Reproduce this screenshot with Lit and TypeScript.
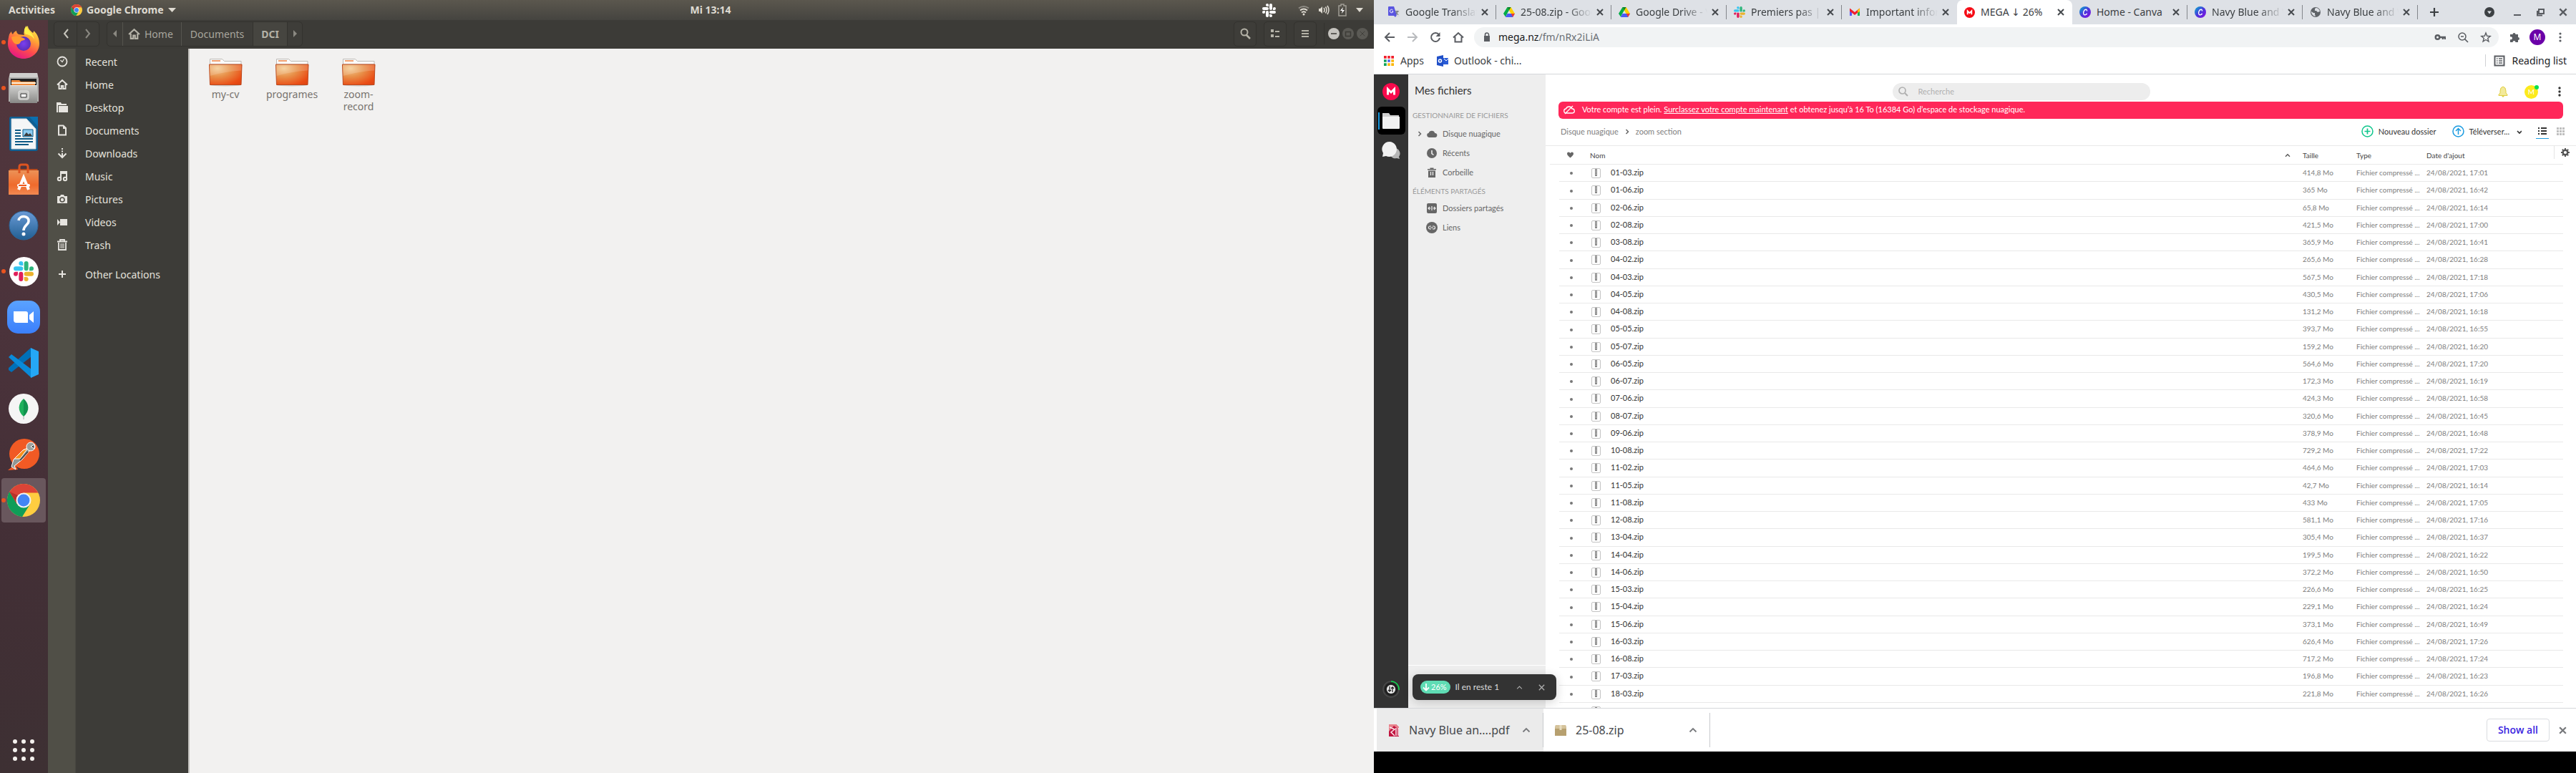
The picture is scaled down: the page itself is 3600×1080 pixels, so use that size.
import { LitElement, html, css, svg, nothing, type TemplateResult } from "lit";
import { customElement } from "lit/decorators.js";

const icon = (w: number, h: number, box: string, body: unknown) =>
  html`<svg width=${w} height=${h} viewBox=${box} fill="none" aria-hidden="true">${body}</svg>`;

const reset = css`
  * { box-sizing: border-box; }
  svg { display: block; flex: none; }
  button { font: inherit; color: inherit; background: none; border: 0; padding: 0; margin: 0; display: flex; align-items: center; justify-content: center; cursor: pointer; }
  a { color: inherit; text-decoration: none; }
  ul { list-style: none; margin: 0; padding: 0; }
`;

/* ---------- shared glyphs ---------- */

const chromeLogo = (s: number) => icon(s, s, "0 0 48 48", svg`
  <circle cx="24" cy="24" r="24" fill="#ffcd40"/>
  <path d="M14.500 29.500 3.400 11.600A24 24 0 0 0 22 47.900L33.500 29.500Z" fill="#0f9d58"/>
  <path d="M24 13H45.300A24 24 0 0 0 3.400 11.600L14.500 29.500Z" fill="#db4437"/>
  <path d="M14.500 29.500 3.400 11.600l12 5z" fill="#b8322a"/>
  <circle cx="24" cy="24" r="11" fill="#f1f1f1"/><circle cx="24" cy="24" r="8.800" fill="#4285f4"/>`);

const slackMark = (s: number, c: string[]) => icon(s, s, "0 0 122 122", svg`
  <path fill=${c[0]} d="M26 77a13 13 0 1 1-13-13h13zM32 77a13 13 0 1 1 26 0v32a13 13 0 1 1-26 0z"/>
  <path fill=${c[1]} d="M45 26a13 13 0 1 1 13-13v13zM45 32a13 13 0 1 1 0 26H13a13 13 0 1 1 0-26z"/>
  <path fill=${c[2]} d="M96 45a13 13 0 1 1 13 13H96zM90 45a13 13 0 1 1-26 0V13a13 13 0 1 1 26 0z"/>
  <path fill=${c[3]} d="M77 96a13 13 0 1 1-13 13V96zM77 90a13 13 0 1 1 0-26h32a13 13 0 1 1 0 26z"/>`);
const slackColors = ["#e01e5a", "#36c5f0", "#2eb67d", "#ecb22e"];

const cross = (s: number, c = "#45494d", w = 2) =>
  icon(s, s, "0 0 12 12", svg`<path d="M2 2 10 10M10 2 2 10" stroke=${c} stroke-width=${w}/>`);

const chevronUp = (s: number, c: string, w = 2) =>
  icon(s, s, "0 0 12 12", svg`<path d="M1.500 8.500 6 4 10.500 8.500" stroke=${c} stroke-width=${w}/>`);

const homeGlyph = (s: number, c: string) => icon(s, s, "0 0 16 16", svg`
  <path d="M1 8.500 8 2l7 6.500M3.500 7.500V14H6.800V10h2.400v4h3.300V7.500" stroke=${c} stroke-width="2"/>`);

/* ---------- launcher icons ---------- */

const firefox = icon(46, 46, "0 0 46 46", svg`
  <defs>
    <linearGradient id="ff" x1=".8" y1="0" x2=".3" y2="1"><stop offset="0" stop-color="#fff44f"/><stop offset=".35" stop-color="#ffa436"/><stop offset=".65" stop-color="#ff4f4b"/><stop offset="1" stop-color="#e31587"/></linearGradient>
    <radialGradient id="fg"><stop offset="0" stop-color="#7a3ff0"/><stop offset="1" stop-color="#5b2fb8"/></radialGradient>
  </defs>
  <path d="M3 12c1-2 2-3 3-4 0 2 1 3 2 4 1-3 3-4 5-5 0 2 1 4 3 5l8 1c-2-4 1-9 5-13 0 5 4 7 7 10 1-1 1-2 1-3 6 5 8 12 8 18 0 12-10 21-22 21S1 37 1 25c0-5 1-9 2-13z" fill="url(#ff)"/>
  <path d="M27 0c0 6 9 9 11 19-3-5-8-7-12-7-3-3-3-8 1-12z" fill="#fff04a"/>
  <circle cx="23" cy="25" r="10" fill="url(#fg)"/>
  <path d="M6 16c4-2 9-2 13 0 3 1 5 1 6 3-1 2-5 1-6 3s-1 3-4 4c-5 0-8-4-9-10z" fill="#ff9a30"/>`);

const filesApp = icon(44, 46, "0 0 44 46", svg`
  <defs><linearGradient id="cab" x2="0" y2="1"><stop stop-color="#d2d2d0"/><stop offset="1" stop-color="#888886"/></linearGradient></defs>
  <path d="M3 2h38l2 8v32H1V10z" fill="#aeaeac"/><path d="M3 2h38l1 6H2z" fill="#cfcfcd"/>
  <path d="M4 10h36v10H4z" fill="#222"/><path d="M5 12h11l2 2h20v5H5z" fill="#f08a3c"/><path d="M5 15h34v2H5z" fill="#fff1dc"/>
  <path d="M3 19h38v25H3z" fill="url(#cab)"/><path d="M3 19h38v1H3z" fill="#e4e4e2"/>
  <rect x="15" y="27" width="14" height="12" rx="2" fill="#c9c9c7" stroke="#e6e6e4"/><path d="M18 31h8v5h-8z" fill="#f5f5f5" stroke="#333"/>`);

const writerApp = icon(42, 48, "0 0 42 48", svg`
  <path d="M3 0h38v45q0 3-3 3H4q-3 0-3-3V3q0-3 2-3z" fill="#0f5f93"/>
  <path d="M29 0h12v14z" fill="#0b6fb0"/><path d="M4 3h21l13 14v28H4z" fill="#f4f6f7" stroke="#c9d3d9"/>
  <path d="M9 19h8M9 23h8M9 27h8M9 31h25M9 35h25M9 39h19" stroke="#0d5a86" stroke-width="2"/>
  <path d="M20 18h14v10H20z" fill="#8ccbf0" stroke="#0d5a86"/><path d="M21 27l4-5 3 3 2-2 3 4z" fill="#3b3b3b"/>`);

const softwareApp = icon(44, 46, "0 0 44 46", svg`
  <defs><linearGradient id="bag" x2="0" y2="1"><stop stop-color="#ec9257"/><stop offset=".6" stop-color="#ef6a2c"/><stop offset="1" stop-color="#f28a52"/></linearGradient></defs>
  <path d="M2 8h40l-2 4H4z" fill="#b94a1c"/><path d="M16 14V5q0-3 3-3h6q3 0 3 3v9" stroke="#dd5420" stroke-width="3"/>
  <path d="M1 10h42v34H1z" fill="url(#bag)"/><path d="M16 14V8M28 14V8" stroke="#dd5420" stroke-width="3"/>
  <path d="M15 37 22 20l7 17" stroke="#fff" stroke-width="4"/><rect x="13" y="29" width="18" height="4" rx="2" fill="#fff"/><path d="M15 31h11" stroke="#ef5a1c" stroke-width="2"/>`);

const helpApp = icon(42, 42, "0 0 42 42", svg`
  <defs><linearGradient id="hp" x2="0" y2="1"><stop stop-color="#6a9ad6"/><stop offset="1" stop-color="#215f92"/></linearGradient></defs>
  <circle cx="21" cy="21" r="20" fill="url(#hp)" stroke="#2c6598"/>
  <path d="M14 14c1-8 15-7 14 1 0 5-7 6-7 13" stroke="#fff" stroke-width="3.500"/><circle cx="21" cy="33" r="2.500" fill="#fff"/>`);

const zoomApp = icon(46, 46, "0 0 46 46", svg`
  <defs><linearGradient id="zm" x2="0" y2="1"><stop stop-color="#5aa2ff"/><stop offset="1" stop-color="#3b7ffb"/></linearGradient></defs>
  <rect width="46" height="46" rx="15" fill="url(#zm)"/><path d="M9 15h17q3 0 3 3v13H13q-4 0-4-4zM31 20l6-5v16l-6-5z" fill="#fff"/>`);

const codeApp = icon(44, 44, "0 0 44 44", svg`
  <path d="M32 1 1 29v3l4 3 28-22z" fill="#0070b8"/><path d="M1 14l4-4 28 21v12z" fill="#0a8ad8"/><path d="M32 1l11 5v32l-11 5z" fill="#25a7f5"/>`);

const mongoApp = icon(44, 44, "0 0 44 44", svg`
  <circle cx="22" cy="22" r="21" fill="#f5f5f5"/><path d="M22 8c8 7 9 17 0 25z" fill="#12924f"/><path d="M22 8c-8 7-9 17 0 25z" fill="#1eb05c"/><path d="M22 33v4" stroke="#aaa"/>`);

const postmanApp = icon(46, 46, "0 0 46 46", svg`
  <circle cx="24" cy="22" r="21" fill="#f15a24"/><path d="M1 45l10-8 4 7z" fill="#f15a24"/>
  <path d="M9 30 22 17l9-4 1 4L21 30 10 39l2 5-6-4z" fill="#8f9693" stroke="#fff"/>
  <path d="M10 29l12-12 7-3L18 29z" fill="#f7921e" stroke="#fff"/><path d="M18 31l11-12" stroke="#4d4f4e" stroke-width="2"/>
  <circle cx="33" cy="12" r="6" fill="#9aa19e" stroke="#fff"/><path d="M33 12l5-3v6z" fill="#444" stroke="#fff"/>`);

const slackApp = html`<span class="disc">${slackMark(28, slackColors)}</span>`;

const launcher: { name: string; glyph: TemplateResult; running?: boolean; active?: boolean }[] = [
  { name: "Firefox", glyph: firefox, running: true },
  { name: "Files", glyph: filesApp, running: true },
  { name: "LibreOffice Writer", glyph: writerApp },
  { name: "Ubuntu Software", glyph: softwareApp },
  { name: "Help", glyph: helpApp },
  { name: "Slack", glyph: slackApp, running: true },
  { name: "Zoom", glyph: zoomApp },
  { name: "Visual Studio Code", glyph: codeApp },
  { name: "MongoDB Compass", glyph: mongoApp },
  { name: "Postman", glyph: postmanApp },
  { name: "Google Chrome", glyph: chromeLogo(46), running: true, active: true },
];

/* ---------- top bar ---------- */

@customElement("top-bar")
class TopBar extends LitElement {
  static styles = [reset, css`
    :host { display: grid; grid-template-columns: 14fr auto 13fr; align-items: center; height: 28px; padding: 0 14px 0 12px; background: linear-gradient(#5b574e, #454440); color: #dfdbd2; font: bold 14px/28px "Noto Sans", sans-serif; }
    .start, .end { display: flex; align-items: center; }
    .start { gap: 22px; }
    .app { gap: 6px; }
    .end { justify-content: flex-end; }
    .tray { gap: 12px; margin-left: 31px; }
  `];
  render() {
    const white = ["#fff", "#fff", "#fff", "#fff"];
    return html`
      <div class="start">
        <button>Activities</button>
        <button class="app">${chromeLogo(16)}<span>Google Chrome</span>${icon(12, 8, "0 0 12 8", svg`<path d="M0 1h11L5.500 7z" fill="#dfdbd2"/>`)}</button>
      </div>
      <time>Mi 13:14</time>
      <div class="end">
        <button aria-label="Slack">${slackMark(19, white)}</button>
        <button class="tray" aria-label="System menu">
          ${icon(16, 16, "0 0 16 16", svg`<path d="M1 5.500q7-5 14 0" stroke="#8e8b84" stroke-width="2"/><path d="M3 8.500q5-4 10 0M5 11.500q3-2.500 6 0" stroke="#dfdbd2" stroke-width="2"/><circle cx="8" cy="14" r="1.500" fill="#dfdbd2"/>`)}
          ${icon(16, 16, "0 0 16 16", svg`<path d="M1 6h2l3-3v10l-3-3H1z" fill="#dfdbd2"/><path d="M8 5q2 3 0 6M10.500 3.500q3 4.500 0 9M13 2q4 6 0 12" stroke="#dfdbd2" stroke-width="1.500"/>`)}
          ${icon(12, 18, "0 0 12 18", svg`<path d="M4 1h4v2h3v14H1V3h3z" stroke="#a09d95" stroke-width="1.500"/><path d="M7 5 3 10h3l-1 4 4-5H6z" fill="#fff"/>`)}
          ${icon(12, 8, "0 0 12 8", svg`<path d="M1 1h10L6 7z" fill="#dfdbd2"/>`)}
        </button>
      </div>`;
  }
}

/* ---------- launcher ---------- */

@customElement("app-launcher")
class AppLauncher extends LitElement {
  static styles = [reset, css`
    :host { display: flex; flex-direction: column; width: 67px; background: linear-gradient(#53373d, #4b333b 40%, #432f36 70%, #3d3033); }
    .slot { height: 64px; width: 66px; padding: 0 2px; position: relative; }
    .tile { width: 62px; height: 62px; border-radius: 4px; }
    .active { background: #69575d; }
    .dot { position: absolute; left: 2px; top: 28px; width: 6px; height: 6px; border-radius: 50%; background: #e95420; }
    .disc { display: flex; align-items: center; justify-content: center; width: 41px; height: 41px; border-radius: 50%; background: #fff; }
    .apps { margin-top: auto; height: 64px; width: 66px; }
  `];
  render() {
    const dots = [4, 16, 28];
    return html`
      ${launcher.map(a => html`
        <div class="slot">
          <button class="tile ${a.active ? "active" : ""}" aria-label=${a.name}>${a.glyph}</button>
          ${a.running ? html`<span class="dot"></span>` : nothing}
        </div>`)}
      <button class="apps" aria-label="Show applications">
        ${icon(32, 32, "0 0 32 32", dots.map(y => dots.map(x => svg`<circle cx=${x} cy=${y} r="3" fill="#f4f1ee"/>`)))}
      </button>`;
  }
}

/* ---------- file manager ---------- */

const g = "#e6e4df";
const places: [string, TemplateResult][] = [
  ["Recent", icon(16, 16, "0 0 16 16", svg`<circle cx="8" cy="8" r="6.500" stroke=${g} stroke-width="1.800"/><path d="M5.500 6 8 8.500 10.500 4.500" stroke=${g} stroke-width="1.300"/>`)],
  ["Home", homeGlyph(16, g)],
  ["Desktop", icon(16, 16, "0 0 16 16", svg`<path d="M0 1h6l1 2h7v2H2v10H0z" fill=${g}/><path d="M3 6h13v9H3z" fill=${g}/>`)],
  ["Documents", icon(16, 16, "0 0 16 16", svg`<path d="M3 1.500h6.500L13 5v9.500H3z" stroke=${g} stroke-width="2"/><path d="M9 1l4 5H9z" fill=${g}/>`)],
  ["Downloads", icon(16, 16, "0 0 16 16", svg`<path d="M8 1v2M8 4.500v2M8 8v5" stroke=${g} stroke-width="2"/><path d="M2.500 8.500 8 14l5.500-5.500" stroke=${g} stroke-width="2"/>`)],
  ["Music", icon(16, 16, "0 0 16 16", svg`<path d="M6 12V2h8v10" stroke=${g} stroke-width="2"/><path d="M6 4h8" stroke=${g} stroke-width="2"/><circle cx="4" cy="12" r="2.200" stroke=${g} stroke-width="2"/><circle cx="12" cy="12" r="2.200" stroke=${g} stroke-width="2"/>`)],
  ["Pictures", icon(16, 16, "0 0 16 16", svg`<path d="M1 4h4l1-2h4l1 2h4v10H1z" fill=${g}/><circle cx="8" cy="9" r="3" stroke="#504f47" stroke-width="1.600"/>`)],
  ["Videos", icon(16, 16, "0 0 16 16", svg`<path d="M5 4h10v9H5z" fill=${g}/><path d="M1 4l4 4.500L1 13z" fill=${g}/>`)],
  ["Trash", icon(16, 16, "0 0 16 16", svg`<path d="M1 3.500h14M5 3V1h6v2M3 5v10h10V5" stroke=${g} stroke-width="1.800"/><path d="M6 6v7M8 6v7M10 6v7" stroke=${g}/>`)],
];

const folder = icon(48, 40, "0 0 48 40", svg`
  <defs>
    <radialGradient id="fo" cx=".25" cy=".2" r="1"><stop stop-color="#f4cb92"/><stop offset=".4" stop-color="#e8914a"/><stop offset=".85" stop-color="#ea4d15"/><stop offset="1" stop-color="#e04512"/></radialGradient>
  </defs>
  <ellipse cx="24" cy="38" rx="21" ry="1.500" fill="#ccc8c4"/>
  <path d="M2.500 9V1.500h17l3 3H46V9z" fill="#fbfbfb" stroke="#bdbab6"/><path d="M5 3h12v2H5z" fill="#f0a070"/>
  <path d="M1.500 9h45.500l-1 28.500h-43.500z" fill="url(#fo)" stroke="#bb4a20"/>
  <path d="M2 9.500h44v8Q22 19 2.500 25z" fill="#fff" opacity=".16"/>`);

@customElement("file-manager")
class FileManager extends LitElement {
  static styles = [reset, css`
    :host { display: flex; flex-direction: column; flex: 1; min-width: 0; font: 14px/17px "Noto Sans", sans-serif; background: #f2f1f0; }
    .bar { display: flex; align-items: center; gap: 10px; height: 40px; padding: 2px 8px 4px; background: #3c3b37; color: #a8a69d; }
    .group, .tool { display: flex; height: 35px; border: 1px solid #33322e; border-radius: 5px; background: #3e3d39; }
    .group button { border-left: 1px solid #33322e; padding: 0 12px; gap: 6px; }
    .group button:first-child { border-left: 0; }
    .nav button { width: 31px; padding: 0; }
    .path button { border-color: #55544e; }
    .path .end { width: 21px; padding: 0; }
    .path .up { padding: 0 11px 0 7px; }
    .path .here { background: #464540; font-weight: bold; color: #b5b3a8; padding: 0 11px; }
    .path .dim { border-color: #33322e; }
    .space { flex: 1; }
    .tool { width: 32px; }
    .win { display: flex; gap: 4px; padding-left: 5px; border-left: 1px solid #33322e; height: 30px; align-items: center; }
    .win button { width: 16px; height: 16px; border-radius: 50%; background: #5b5a55; }
    .win .min { background: #c6c4bf; }
    .body { display: flex; flex: 1; min-height: 0; }
    .places { width: 198px; padding-top: 2px; color: #e4e2dc; background: linear-gradient(90deg, #504f47 38px, #484740 38px, #484740 39px, #3d3c38 39px); border-right: 2px solid #c6c3bf; }
    .place { display: flex; align-items: center; height: 32px; padding-left: 12px; gap: 24px; }
    .other { margin-top: 9px; }
    .grid { display: flex; gap: 1px; padding: 13px 4px; align-items: flex-start; color: #77736e; }
    .item { width: 92px; display: flex; flex-direction: column; align-items: center; gap: 2px; text-align: center; }
    .label { width: 60px; display: flex; justify-content: center; }
  `];
  render() {
    const c = "#b5b3a8";
    return html`
      <header class="bar">
        <div class="group nav">
          <button aria-label="Back">${icon(10, 14, "0 0 10 14", svg`<path d="M8 1 3 7l5 6" stroke="#c8c6bd" stroke-width="2"/>`)}</button>
          <button aria-label="Forward">${icon(10, 14, "0 0 10 14", svg`<path d="M2 1l5 6-5 6" stroke="#8b8982" stroke-width="2"/>`)}</button>
        </div>
        <nav class="group path" aria-label="Location">
          <button class="end" aria-label="Scroll left">${icon(6, 10, "0 0 6 10", svg`<path d="M5 0v10L0 5z" fill="#8b8982"/>`)}</button>
          <button class="up">${homeGlyph(17, c)}<span>Home</span></button>
          <button>Documents</button>
          <button class="here dim">DCI</button>
          <button class="end dim" aria-label="Scroll right">${icon(6, 10, "0 0 6 10", svg`<path d="M1 0v10l5-5z" fill="#8b8982"/>`)}</button>
        </nav>
        <span class="space"></span>
        <button class="tool" aria-label="Search">${icon(16, 16, "0 0 16 16", svg`<circle cx="7" cy="6" r="4.500" stroke=${c} stroke-width="2"/><path d="M10 10l5 5" stroke=${c} stroke-width="2.500"/>`)}</button>
        <button class="tool" aria-label="View as list">${icon(14, 12, "0 0 14 12", svg`<path d="M1 0h4v4H1zM1 7h4v4H1z" fill=${c}/><path d="M7 3h6M7 10h6" stroke=${c} stroke-width="2"/>`)}</button>
        <button class="tool" aria-label="Menu">${icon(12, 12, "0 0 12 12", svg`<path d="M1 2h10M1 6h10M1 10h10" stroke=${c} stroke-width="2"/>`)}</button>
        <div class="win">
          <button class="min" aria-label="Minimize">${icon(10, 10, "0 0 10 10", svg`<path d="M1 5h8" stroke="#3c3b37" stroke-width="1.500"/>`)}</button>
          <button aria-label="Maximize">${icon(10, 10, "0 0 10 10", svg`<path d="M1.500 2.500h7v6h-7z" stroke="#3c3b37" stroke-width="1.500"/>`)}</button>
          <button aria-label="Close">${cross(10, "#3c3b37", 1)}</button>
        </div>
      </header>
      <div class="body">
        <nav class="places" aria-label="Places">
          ${places.map(([name, glyph]) => html`<a class="place" href="#${name}">${glyph}<span>${name}</span></a>`)}
          <a class="place other" href="#other">${icon(16, 16, "0 0 16 16", svg`<path d="M8 3v10M3 8h10" stroke=${g} stroke-width="2"/>`)}<span>Other Locations</span></a>
        </nav>
        <div class="grid">
          ${["my-cv", "programes", "zoom-record"].map(n => html`<a class="item" href="#${n}">${folder}<span class="label">${n}</span></a>`)}
        </div>
      </div>`;
  }
}

/* ---------- browser chrome ---------- */

const drive = icon(16, 16, "0 0 16 16", svg`
  <path d="M5.500 1h5L5.500 9.500 3 14.500 0 10z" fill="#00ac47"/><path d="M5.500 1h5L16 10h-5.500z" fill="#ffcf00"/><path d="M5.500 1h5L8 5.500z" fill="#00832d"/>
  <path d="M5.500 10H16l-3 5H2.800z" fill="#4a5cf5"/><path d="M11 10h5l-3 5z" fill="#f03a2e"/>`);
const canva = html`<svg width="16" height="16" viewBox="0 0 16 16" aria-hidden="true">
  <defs><linearGradient id="cv" x2="1" y2="1"><stop stop-color="#00b8cc"/><stop offset=".5" stop-color="#4b35dc"/><stop offset="1" stop-color="#8a0de0"/></linearGradient></defs>
  <circle cx="8" cy="8" r="8" fill="url(#cv)"/><path d="M10.500 6.500C11 3.500 7.500 3.500 6 7c-1.300 3.500.5 5.500 2.500 4.700 1-.4 1.700-1 2-2" fill="none" stroke="#fff" stroke-width="1.400"/></svg>`;
const megaLogo = (s: number, c: string) => icon(s, s, "0 0 24 24", svg`<circle cx="12" cy="12" r="12" fill=${c}/><path d="M7.500 16.500v-8l4.500 4.500 4.500-4.500v8" stroke="#fff" stroke-width="3"/>`);

const tabs: { title: string; glyph: TemplateResult; active?: boolean }[] = [
  { title: "Google Translate", glyph: icon(16, 16, "0 0 16 16", svg`<path d="M6 4h9q1 0 1 1v10H9z" fill="#dadce0"/><path d="M0 1q0-1 1-1h7l4 12-2 3-2-2H1q-1 0-1-1z" fill="#5a55e0"/><path d="M6.500 5A2.300 2.300 0 1 0 7 7H5" stroke="#fff"/><path d="M10 7h5M12.500 6v1q0 3-2 4M11.500 8.500 14 12" stroke="#5f6368"/>`) },
  { title: "25-08.zip - Google Drive", glyph: drive },
  { title: "Google Drive - Virus", glyph: drive },
  { title: "Premiers pas | Slack", glyph: slackMark(16, slackColors) },
  { title: "Important information", glyph: icon(16, 16, "0 0 16 16", svg`<path d="M1 3v10h3V6z" fill="#5a55f5"/><path d="M15 3v10h-3V6z" fill="#11b354"/><path d="M1 2.500 8 8l7-5.500v4L8 12 1 6.500z" fill="#f01f2e"/><path d="M12 5l3-2.500V7l-3 2z" fill="#fbbc04"/>`) },
  { title: "MEGA ↓ 26%", glyph: megaLogo(15, "#f50a14"), active: true },
  { title: "Home - Canva", glyph: canva },
  { title: "Navy Blue and White", glyph: canva },
  { title: "Navy Blue and White", glyph: icon(16, 16, "0 0 16 16", svg`<circle cx="8" cy="8" r="7" fill="#5f6368"/><path d="M8 2q5 0 6 5l-3 1-2-2-2 0 0-2zM2 7l3 2h2v2l1 3q-5-1-6-6z" fill="#dee1e6"/>`) },
];

@customElement("browser-bars")
class BrowserBars extends LitElement {
  static styles = [reset, css`
    :host { display: block; font: 14px/18px "Noto Sans", "DejaVu Sans", sans-serif; color: #3c4043; background: #fff; border-bottom: 1px solid #d5d7da; }
    .tabs { display: flex; align-items: center; height: 34px; padding-left: 10px; background: #dee1e6; }
    .tab { display: flex; align-items: center; width: 161px; height: 34px; padding: 0 9px 0 10px; position: relative; }
    .tab::after { content: ""; position: absolute; right: 0; top: 7px; height: 20px; width: 1px; background: #83868b; }
    .tab.on { background: #fff; border-radius: 8px 8px 0 0; }
    .tab.on::after, .tab.pre::after { display: none; }
    .pick { flex: 1; min-width: 0; gap: 8px; justify-content: flex-start; }
    .title { flex: 1; overflow: hidden; white-space: nowrap; text-align: left; mask-image: linear-gradient(90deg, #000 65%, transparent); }
    .on .title, .full .title { mask-image: none; }
    .shut { margin-left: 4px; width: 14px; height: 14px; }
    .plus { margin-left: 16px; }
    .win { display: flex; align-items: center; gap: 18px; margin-left: auto; padding-right: 11px; }
    .win .find { margin-right: 7px; }
    .tools { display: flex; align-items: center; height: 36px; padding: 0 14px; }
    .nav { display: flex; gap: 16px; }
    .omni { display: flex; align-items: center; flex: 1; height: 28px; margin: 0 14px; padding: 0 10px; border-radius: 14px; background: #f1f3f4; }
    .url { margin-left: 8px; flex: 1; color: #6b6f74; }
    .host { color: #17181a; }
    .acts { display: flex; gap: 16px; }
    .me { width: 22px; height: 22px; margin: 0 13px; border-radius: 50%; background: #6a00a8; color: #fff; font-size: 12px; }
    .marks { display: flex; align-items: center; height: 33px; padding: 0 13px 4px; }
    .marks a { display: flex; align-items: center; gap: 8px; margin-right: 18px; white-space: nowrap; }
    .marks .list { margin: 0 0 0 auto; padding-left: 11px; border-left: 1px solid #cfd1d4; height: 17px; gap: 9px; color: #202124; }
  `];
  render() {
    const k = "#5a5d62";
    return html`
      <div class="tabs" role="tablist">
        ${tabs.map((t, i) => html`
          <div class="tab ${t.active ? "on" : ""} ${tabs[i + 1]?.active ? "pre" : ""} ${t.title === "Home - Canva" ? "full" : ""}">
            <button class="pick" role="tab" aria-selected=${t.active ? "true" : "false"}>${t.glyph}<span class="title">${t.title}</span></button>
            <button class="shut" aria-label="Close tab">${cross(12)}</button>
          </div>`)}
        <button class="plus" aria-label="New tab">${icon(14, 14, "0 0 14 14", svg`<path d="M7 1v12M1 7h12" stroke="#3c4043" stroke-width="2.200"/>`)}</button>
        <div class="win">
          <button class="find" aria-label="Search tabs">${icon(14, 14, "0 0 14 14", svg`<circle cx="7" cy="7" r="7" fill="#3c4043"/><path d="M4 5.500h6L7 9.500z" fill="#dee1e6"/>`)}</button>
          <button aria-label="Minimize">${icon(14, 14, "0 0 14 14", svg`<path d="M2 11h10" stroke=${k} stroke-width="2"/>`)}</button>
          <button aria-label="Restore">${icon(14, 14, "0 0 14 14", svg`<path d="M5 3h7v6H5zM3 5v6.500h7" stroke=${k} stroke-width="2"/>`)}</button>
          <button aria-label="Close window">${cross(14, k)}</button>
        </div>
      </div>
      <div class="tools">
        <div class="nav">
          <button aria-label="Back">${icon(16, 16, "0 0 16 16", svg`<path d="M15 8H2M8 2 2 8l6 6" stroke=${k} stroke-width="2"/>`)}</button>
          <button aria-label="Forward">${icon(16, 16, "0 0 16 16", svg`<path d="M1 8h13M8 2l6 6-6 6" stroke="#b9bbbe" stroke-width="2"/>`)}</button>
          <button aria-label="Reload">${icon(16, 16, "0 0 16 16", svg`<path d="M13 4.500A6 6 0 1 0 14 9" stroke=${k} stroke-width="2"/><path d="M14.500 1v6H8.500z" fill=${k}/>`)}</button>
          <button aria-label="Home page">${icon(16, 16, "0 0 16 16", svg`<path d="M1 8.500 8 2l7 6.500M3.500 7.500v7h9v-7" stroke=${k} stroke-width="2"/>`)}</button>
        </div>
        <div class="omni">
          ${icon(16, 16, "0 0 16 16", svg`<path d="M4 6h8v8H4z" fill=${k}/><path d="M5.500 7V4.500a2.500 2.500 0 0 1 5 0V7" stroke=${k} stroke-width="1.600"/>`)}
          <span class="url"><span class="host">mega.nz</span>/fm/nRx2iLiA</span>
          <div class="acts">
            <button aria-label="Passwords">${icon(16, 16, "0 0 16 16", svg`<circle cx="4.500" cy="8" r="2.800" stroke=${k} stroke-width="2.400"/><path d="M7 8h8v3M12 8v3" stroke=${k} stroke-width="2.400"/>`)}</button>
            <button aria-label="Zoom out">${icon(16, 16, "0 0 16 16", svg`<circle cx="7" cy="7" r="5" stroke=${k} stroke-width="1.500"/><path d="M5 7h4M10.500 10.500 15 15" stroke=${k} stroke-width="1.700"/>`)}</button>
            <button aria-label="Bookmark">${icon(16, 16, "0 0 16 16", svg`<path d="M8 2l1.700 4.300 4.500.3-3.500 2.900 1.200 4.500L8 11.500 4.100 14l1.200-4.500L1.800 6.600l4.500-.3z" stroke=${k} stroke-width="1.400"/>`)}</button>
          </div>
        </div>
        <button aria-label="Extensions">${icon(16, 16, "0 0 16 16", svg`<path d="M2 4h3.500a2 2 0 1 1 4 0H13v4a2 2 0 1 1 0 4v3H9.500a2 2 0 1 0-4 0H2v-4a2 2 0 1 0 0-3.500z" fill=${k}/>`)}</button>
        <button class="me" aria-label="Profile">M</button>
        <button aria-label="Browser menu">${icon(16, 16, "0 0 16 16", svg`<circle cx="8" cy="3" r="1.600" fill=${k}/><circle cx="8" cy="8" r="1.600" fill=${k}/><circle cx="8" cy="13" r="1.600" fill=${k}/>`)}</button>
      </div>
      <nav class="marks">
        <a href="#apps">${icon(16, 16, "0 0 16 16", svg`
          <path d="M1 1h4v4H1zM6 1h4v4H6zM11 1h4v4h-4z" fill="#f0202c"/><path d="M1 6h4v4H1z" fill="#0fa35a"/><path d="M6 6h4v4H6z" fill="#4a5cf5"/><path d="M11 6h4v4h-4zM6 11h4v4H6zM11 11h4v4h-4z" fill="#fbb604"/><path d="M1 11h4v4H1z" fill="#0fa35a"/>
          <path d="M5.500 0v16M10.500 0v16M0 5.500h16M0 10.500h16" stroke="#fff" stroke-width="1.500"/>`)}<span>Apps</span></a>
        <a href="#outlook">${icon(16, 16, "0 0 16 16", svg`<path d="M0 2l9-2v16l-9-2z" fill="#2050c8"/><path d="M9 4h7v9H9z" fill="#2a5cd6"/><path d="M10 5l3 3 3-3" stroke="#fff"/><circle cx="4.500" cy="8" r="2" stroke="#fff" stroke-width="1.500"/>`)}<span>Outlook - chi...</span></a>
        <button class="list">${icon(16, 16, "0 0 16 16", svg`<path d="M1.500 1.500h13v13h-13z" stroke=${k} stroke-width="2"/><path d="M4 5h1.500M7 5h5M4 8h1.500M7 8h5M4 11h1.500M7 11h5" stroke=${k} stroke-width="1.500"/>`)}<span>Reading list</span></button>
      </nav>`;
  }
}

/* ---------- cloud drive page ---------- */

const files = `01-03|414,8|17:01
01-06|365|16:42
02-06|65,8|16:14
02-08|421,5|17:00
03-08|365,9|16:41
04-02|265,6|16:28
04-03|567,5|17:18
04-05|430,5|17:06
04-08|131,2|16:18
05-05|393,7|16:55
05-07|159,2|16:20
06-05|564,6|17:20
06-07|172,3|16:19
07-06|424,3|16:58
08-07|320,6|16:45
09-06|378,9|16:48
10-08|729,2|17:22
11-02|464,6|17:03
11-05|42,7|16:14
11-08|433|17:05
12-08|581,1|17:16
13-04|305,4|16:37
14-04|199,5|16:22
14-06|372,2|16:50
15-03|226,6|16:25
15-04|229,1|16:24
15-06|373,1|16:49
16-03|626,4|17:26
16-08|717,2|17:24
17-03|196,8|16:23
18-03|221,8|16:26`.split("\n").map(l => l.split("|"));

const d = "#666";
const zipIcon = icon(13, 14, "0 0 13 14", svg`<rect x=".5" y=".5" width="12" height="13" rx="1.500" fill="#fdfdfd" stroke="#c4c4c4"/><path d="M6.500 1v10" stroke="#8a8a8a" stroke-width="3"/><path d="M6.500 2v8" stroke="#e8e8e8" stroke-dasharray="1 1"/>`);

@customElement("cloud-drive")
class CloudDrive extends LitElement {
  static styles = [reset, css`
    :host { display: flex; flex: 1; min-height: 0; overflow: hidden; position: relative; background: #fff; font: 11px/16px Lato, sans-serif; color: #666; }
    .rail { width: 48px; background: #333; display: flex; flex-direction: column; align-items: center; padding: 12px 0 14px; }
    .files { width: 39px; height: 39px; margin: 9px 0; background: #000; border-radius: 6px; position: relative; }
    .files::before { content: ""; position: absolute; left: 1px; top: 8px; width: 2px; height: 24px; background: #1b9be0; }
    .moves { margin-top: auto; }
    .side { width: 192px; background: #eee; display: flex; flex-direction: column; }
    .head { font-size: 15px; line-height: 20px; color: #333; padding: 12px 9px 0; margin: 0; font-weight: normal; }
    .sec { font-size: 10px; line-height: 12px; color: #999; margin: 0; padding: 0 6px; font-weight: normal; }
    .sec.a { margin-top: 19px; }
    .sec.b { margin-top: 7px; }
    .sec + ul { margin-top: 6px; }
    .sec.b + ul { margin-top: 4px; }
    .row { display: flex; align-items: center; height: 27px; }
    .twist { width: 25px; padding-left: 12px; }
    .row a { display: flex; align-items: center; gap: 7px; }
    .quota { margin-top: auto; height: 60px; border-top: 1px solid #fff; padding: 10px; display: flex; gap: 12px; font-size: 10px; line-height: 14px; color: #333; white-space: nowrap; }
    .quota a { color: #00bfa5; }
    .main { flex: 1; min-width: 0; display: flex; flex-direction: column; }
    .top { display: flex; align-items: center; height: 38px; padding-top: 10px; }
    .find { flex: 1; display: flex; justify-content: center; }
    .box { display: flex; align-items: center; gap: 14px; width: 360px; height: 24px; padding: 0 8px; border-radius: 12px; background: #ededed; }
    .box input { flex: 1; border: 0; background: none; outline: 0; font: inherit; padding: 0; }
    .box input::placeholder { color: #b0b0b0; opacity: 1; }
    .user { display: flex; align-items: center; width: 111px; gap: 23px; padding-left: 2px; }
    .face { position: relative; width: 19px; height: 19px; border-radius: 50%; background: #fcea1c; color: #fff; font-size: 10px; }
    .face::after { content: ""; position: absolute; right: -1px; top: 0; width: 6px; height: 6px; border-radius: 50%; background: #0be04e; }
    .alert { display: flex; align-items: center; gap: 10px; height: 24px; margin: 0 18px; padding: 0 7px 2px; border-radius: 6px; background: #ff2759; color: #fff; }
    .alert a { text-decoration: underline; }
    .crumbs { display: flex; align-items: center; height: 38px; padding: 0 16px 2px 21px; border-bottom: 1px solid #e9e9e9; color: #808080; }
    .crumbs nav { display: flex; align-items: center; gap: 8px; flex: 1; }
    .cmd { gap: 7px; margin-right: 22px; color: #333; }
    .cmd.up { margin-right: 20px; }
    .view { width: 18px; height: 21px; border-bottom: 1px solid #1b9be0; }
    .tiles { margin-left: 11px; }
    .scroll { flex: 1; min-height: 0; overflow: hidden; position: relative; padding: 0 18px 0 6px; }
    .gear { position: absolute; right: 0; top: 0; width: 31px; height: 18px; border-left: 1px solid #e4e4e4; }
    table { width: 100%; border-spacing: 0; table-layout: fixed; font-size: 10px; line-height: 14px; }
    th, td { padding: 0 0 0 12px; text-align: left; font-weight: normal; white-space: nowrap; border-bottom: 1px solid #e9e9e9; }
    th { height: 26px; color: #444; }
    td { height: 24px; color: #808080; padding-bottom: 2px; }
    tr:nth-child(4n + 2) td { height: 25px; }
    .c-fav { width: 44px; }
    .c-size { width: 75px; }
    .c-type { width: 98px; }
    .c-date { width: 203px; }
    th.fav { padding-left: 24px; }
    td.fav { padding: 0 0 0 28px; border-bottom: 0; background: linear-gradient(#e9e9e9, #e9e9e9) right bottom / calc(100% - 13px) 1px no-repeat; }
    .pip { display: block; width: 4px; height: 4px; border-radius: 50%; background: #777; }
    .sort { display: flex; align-items: center; justify-content: space-between; padding-right: 5px; }
    .name { display: flex; align-items: center; gap: 14px; padding-left: 2px; font-size: 11px; color: #333; }
    .name svg { margin-top: 2px; }
    .toast { position: absolute; left: 54px; bottom: 11px; width: 201px; height: 36px; display: flex; align-items: center; padding: 0 15px 0 11px; border-radius: 8px; background: #333; color: #ddd; font-size: 12px; box-shadow: 0 3px 14px rgba(0, 0, 0, .18); }
    .pct { display: flex; align-items: center; gap: 2px; height: 18px; padding: 0 5px 0 3px; border-radius: 9px; background: #5fdcb4; color: #fff; margin-right: 7px; font-size: 11px; }
    .toast button { margin-left: 21px; }
    .toast .open { margin-left: auto; }
  `];
  item(label: string, glyph: TemplateResult, twist = false) {
    return html`<li class="row"><span class="twist">${twist ? icon(8, 8, "0 0 8 8", svg`<path d="M2.500 1l3 3-3 3" stroke=${d} stroke-width="1.500"/>`) : nothing}</span><a href="#${label}">${glyph}<span>${label}</span></a></li>`;
  }
  render() {
    return html`
      <nav class="rail" aria-label="MEGA">
        <button aria-label="MEGA">${megaLogo(24, "#f90a4c")}</button>
        <button class="files" aria-label="Mes fichiers">${icon(24, 24, "0 0 24 24", svg`<path d="M0 1h9l2 3h12v4H0z" fill="#cfcfcf"/><path d="M0 6h24v16q0 1-1 1H1q-1 0-1-1z" fill="#f1f1f1"/>`)}</button>
        <button aria-label="Chat">${icon(26, 26, "0 0 26 26", svg`<path d="M18 10a7.500 7.500 0 0 1 6 12l1 3-4-1a7.500 7.500 0 0 1-9-4z" fill="#b5b5b5"/><path d="M11 1a10.500 10.500 0 1 1-5 20l-5 1 1-5A10.500 10.500 0 0 1 11 1z" fill="#f1f1f1"/>`)}</button>
        <button class="moves" aria-label="Transferts">${icon(24, 24, "0 0 24 24", svg`<circle cx="12" cy="12" r="11" stroke="#4a4a4a" stroke-width="1.500"/><circle cx="12" cy="12" r="8" stroke="#1c1c1c" stroke-width="2"/><path d="M12 1a11 11 0 0 1 11 12" stroke="#0be04e" stroke-width="1.500"/><circle cx="12" cy="12" r="6" fill="#eee"/><path d="M10 8v7M8 13l2 2 2-2M14 16V9M12 11l2-2 2 2" stroke="#222" stroke-width="1.300"/>`)}</button>
      </nav>
      <aside class="side">
        <h1 class="head">Mes fichiers</h1>
        <h2 class="sec a">GESTIONNAIRE DE FICHIERS</h2>
        <ul>
          ${this.item("Disque nuagique", icon(16, 16, "0 0 16 16", svg`<path d="M4 13a3.200 3.200 0 0 1-.3-6.300 4.500 4.500 0 0 1 8.500.3A3 3 0 0 1 12.500 13z" fill=${d}/>`), true)}
          ${this.item("Récents", icon(16, 16, "0 0 16 16", svg`<circle cx="8" cy="8" r="7" fill=${d}/><path d="M8 4v4.500l2.500 2" stroke="#eee" stroke-width="1.600"/>`))}
          ${this.item("Corbeille", icon(16, 16, "0 0 16 16", svg`<path d="M2 3h12v1.500H2zM5.500 1.500h5V3h-5zM3 5.500h10V15H3z" fill=${d}/><path d="M6.500 7v5M9.500 7v5" stroke="#eee" stroke-width="1.300"/>`))}
        </ul>
        <h2 class="sec b">ÉLÉMENTS PARTAGÉS</h2>
        <ul>
          ${this.item("Dossiers partagés", icon(16, 16, "0 0 16 16", svg`<rect x="1" y="1" width="14" height="14" rx="2" fill=${d}/><path d="M8 5v6M3 8h3.500M9.500 8H13M5 6 3 8l2 2M11 6l2 2-2 2" stroke="#eee" stroke-width="1.200"/>`))}
          ${this.item("Liens", icon(16, 16, "0 0 16 16", svg`<circle cx="8" cy="8" r="8" fill=${d}/><path d="M7 10H5.500a2 2 0 0 1 0-4H7M9 6h1.500a2 2 0 0 1 0 4H9M6 8h4" stroke="#eee" stroke-width="1.200"/>`))}
        </ul>
        <div class="quota"><span>Quota</span><a href="#pro">SURCLASSER VOTRE COMPTE</a></div>
      </aside>
      <main class="main">
        <div class="top">
          <div class="find"><label class="box">${icon(14, 14, "0 0 14 14", svg`<circle cx="5.500" cy="5.500" r="4.500" stroke="#b0b0b0" stroke-width="1.700"/><path d="M9 9l4 4" stroke="#b0b0b0" stroke-width="2"/>`)}<input type="search" placeholder="Recherche" aria-label="Recherche"></label></div>
          <div class="user">
            <button aria-label="Notifications">${icon(14, 16, "0 0 14 16", svg`<path d="M7 1q4 1 4 6v3l2 2v1.500H1V12l2-2V7q0-5 4-6z" fill="#f3ea9a" stroke="#e0cf45"/><path d="M5 14h4l-2 2z" fill="#e0cf45"/>`)}</button>
            <button class="face" aria-label="Compte">M</button>
            <button aria-label="Menu">${icon(14, 14, "0 0 14 14", svg`<circle cx="7" cy="2" r="1.700" fill="#333"/><circle cx="7" cy="7" r="1.700" fill="#333"/><circle cx="7" cy="12" r="1.700" fill="#333"/>`)}</button>
          </div>
        </div>
        <div class="alert" role="alert">
          ${icon(16, 14, "0 0 16 14", svg`<path d="M4 12a3 3 0 0 1-.5-6A4.500 4.500 0 0 1 12 6a3 3 0 0 1 .5 6z" stroke="#fff" stroke-width="1.300"/><path d="M2 13 13 2" stroke="#fff" stroke-width="1.300"/>`)}
          <span>Votre compte est plein. <a href="#pro">Surclassez votre compte maintenant</a> et obtenez jusqu’à 16 To (16384 Go) d’espace de stockage nuagique.</span>
        </div>
        <div class="crumbs">
          <nav aria-label="Fil d’Ariane"><a href="#root">Disque nuagique</a>${icon(8, 8, "0 0 8 8", svg`<path d="M2.500 1l3 3-3 3" stroke=${d} stroke-width="1.500"/>`)}<a href="#zoom">zoom section</a></nav>
          <button class="cmd">${icon(17, 17, "0 0 17 17", svg`<circle cx="8.500" cy="8.500" r="7.500" stroke="#10c68c" stroke-width="1.500"/><path d="M8.500 4.500v8M4.500 8.500h8" stroke="#10c68c" stroke-width="1.700"/>`)}<span>Nouveau dossier</span></button>
          <button class="cmd up">${icon(17, 17, "0 0 17 17", svg`<circle cx="8.500" cy="8.500" r="7.500" stroke="#1b9be0" stroke-width="1.500"/><path d="M8.500 13V4.500M5 8l3.500-3.500L12 8" stroke="#1b9be0" stroke-width="1.500"/>`)}<span>Téléverser...</span>${icon(10, 8, "0 0 10 8", svg`<path d="M4 3l3 3 3-3" stroke="#333" stroke-width="1.700"/>`)}</button>
          <button class="view" aria-label="Liste">${icon(12, 12, "0 0 12 12", svg`<path d="M0 2h2M4 2h8M0 6h2M4 6h8M0 10h2M4 10h8" stroke="#333" stroke-width="1.800"/>`)}</button>
          <button class="tiles" aria-label="Vignettes">${icon(11, 11, "0 0 11 11", [0, 4, 8].map(y => [0, 4, 8].map(x => svg`<rect x=${x} y=${y} width="3" height="3" fill="#bfbfbf"/>`)))}</button>
        </div>
        <div class="scroll">
          <table>
            <colgroup><col class="c-fav"><col><col class="c-size"><col class="c-type"><col class="c-date"></colgroup>
            <thead><tr>
              <th class="fav" aria-label="Favoris">${icon(9, 9, "0 0 9 9", svg`<path d="M4.500 8.500Q0 5 0 2.800 0 .5 2.200.5q1.500 0 2.300 1.500Q5.300.5 6.800.5 9 .5 9 2.800 9 5 4.500 8.500z" fill=${d}/>`)}</th>
              <th><div class="sort"><span>Nom</span>${chevronUp(8, "#555")}</div></th>
              <th>Taille</th><th>Type</th><th>Date d'ajout</th>
            </tr></thead>
            <tbody>
              ${files.map(([n, s, t]) => html`<tr>
                <td class="fav"><span class="pip"></span></td>
                <td><div class="name">${zipIcon}<span>${n}.zip</span></div></td>
                <td>${s} Mo</td><td>Fichier compressé ...</td><td>24/08/2021, ${t}</td>
              </tr>`)}
              <tr><td class="fav"></td><td><div class="name">${zipIcon}</div></td><td></td><td></td><td></td></tr>
            </tbody>
          </table>
          <button class="gear" aria-label="Paramètres">${icon(12, 12, "0 0 12 12", svg`<circle cx="6" cy="6" r="3.300" stroke="#555" stroke-width="2.400"/><path d="M6 0v2M6 10v2M0 6h2M10 6h2M1.800 1.800l1.400 1.400M8.800 8.800l1.400 1.400M1.800 10.200l1.400-1.400M8.800 3.200l1.400-1.400" stroke="#555" stroke-width="2"/>`)}</button>
        </div>
      </main>
      <div class="toast" role="status">
        <span class="pct">${icon(10, 12, "0 0 10 12", svg`<path d="M5 1v9M1 6.500l4 4 4-4" stroke="#fff" stroke-width="1.800"/>`)}<span>26%</span></span>
        <span>Il en reste 1</span>
        <button class="open" aria-label="Développer">${chevronUp(9, "#aaa", 1.5)}</button>
        <button aria-label="Fermer">${cross(11, "#aaa", 1.5)}</button>
      </div>`;
  }
}

/* ---------- download shelf ---------- */

@customElement("download-shelf")
class DownloadShelf extends LitElement {
  static styles = [reset, css`
    :host { display: flex; align-items: stretch; height: 61px; padding-left: 4px; background: #fff; border-top: 1px solid #d5d7da; font: 16px/22px "Noto Sans", sans-serif; color: #45484c; }
    .item { display: flex; align-items: center; width: 233px; position: relative; padding: 0 18px 0 16px; }
    .item::after { content: ""; position: absolute; right: 0; top: 6px; bottom: 6px; width: 1px; background: #c8cacd; }
    .hover { background: #ebebeb; }
    .item a { display: flex; align-items: center; gap: 13px; flex: 1; }
    .rest { display: flex; align-items: center; gap: 12px; margin-left: auto; padding-right: 12px; }
    .all { height: 32px; padding: 0 15px; border: 1px solid #dadce0; border-radius: 4px; color: #3a24e0; font: 600 14px/20px "Open Sans", sans-serif; }
  `];
  render() {
    return html`
      <div class="item hover"><a href="#pdf">${icon(16, 17, "0 0 16 17", svg`<path d="M1 0h10l4 4v13H1z" fill="#c01540"/><path d="M1 0h10l4 4v3L8 2 1 10z" fill="#e8828c"/><path d="M2 4l7 3-5 4 5 5M11 5v11M14 5v11" stroke="#fbe9ec" stroke-width="1.500"/>`)}<span>Navy Blue an....pdf</span></a><button aria-label="Options">${chevronUp(12, "#77797c", 1.8)}</button></div>
      <div class="item"><a href="#zip">${icon(16, 15, "0 0 16 15", svg`<path d="M1 0h14l1 4v11H0V4z" fill="#b7a06f"/><path d="M1 0h14l1 5H0z" fill="#d5c39b"/><path d="M6.500 0h3v7h-3z" fill="#e7dcc0"/>`)}<span>25-08.zip</span></a><button aria-label="Options">${chevronUp(12, "#77797c", 1.8)}</button></div>
      <div class="rest"><button class="all">Show all</button><button aria-label="Close downloads bar">${cross(13, "#77797c", 2)}</button></div>`;
  }
}

@customElement("app-root")
class AppRoot extends LitElement {
  static styles = [reset, css`
    :host { display: grid; grid-template-columns: 8fr 7fr; height: 100vh; background: #000; overflow: hidden; }
    .left, .right { display: flex; flex-direction: column; min-width: 0; min-height: 0; }
    .desk { display: flex; flex: 1; min-height: 0; }
    .right { padding-bottom: 30px; }
  `];
  render() {
    return html`
      <section class="left">
        <top-bar></top-bar>
        <div class="desk"><app-launcher></app-launcher><file-manager></file-manager></div>
      </section>
      <section class="right">
        <browser-bars></browser-bars>
        <cloud-drive></cloud-drive>
        <download-shelf></download-shelf>
      </section>`;
  }
}
